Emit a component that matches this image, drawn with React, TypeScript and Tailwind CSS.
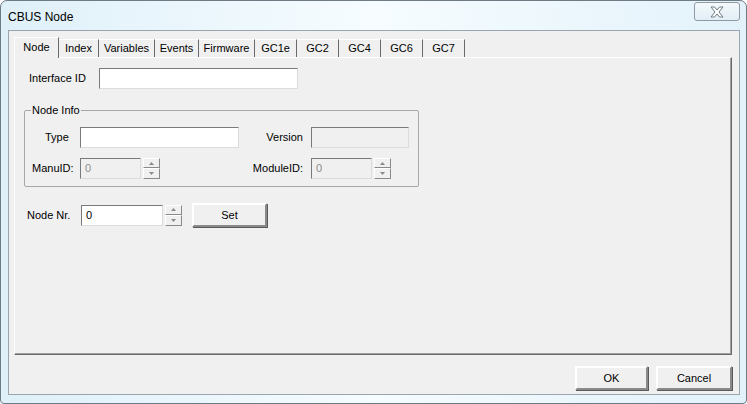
import React from "react";

const tabs = [
  { label: "Node", w: "w-[45px]" },
  { label: "Index", w: "w-[40px]" },
  { label: "Variables", w: "w-[56px]" },
  { label: "Events", w: "w-[44px]" },
  { label: "Firmware", w: "w-[56px]" },
  { label: "GC1e", w: "w-[42px]" },
  { label: "GC2", w: "w-[42px]" },
  { label: "GC4", w: "w-[42px]" },
  { label: "GC6", w: "w-[42px]" },
  { label: "GC7", w: "w-[42px]" },
];

function TextBox({ w, disabled, value }: { w: string; disabled?: boolean; value?: string }) {
  return (
    <div
      className={`${w} h-[21px] flex items-center pl-[4px] border border-t-[#7a7a7a] border-l-[#7a7a7a] border-r-[#dcdcdc] border-b-[#dcdcdc] ${
        disabled ? "bg-[#f0f0f0] text-[#8d8d8d]" : "bg-white text-black"
      }`}
    >
      {value}
    </div>
  );
}

function Arrow({ up }: { up?: boolean }) {
  return (
    <svg width="5" height="3" viewBox="0 0 5 3">
      {up ? <path d="M2.5 0 L5 3 L0 3 Z" fill="#8a8a8a" /> : <path d="M0 0 L5 0 L2.5 3 Z" fill="#8a8a8a" />}
    </svg>
  );
}

function Spinner({ className = "" }: { className?: string }) {
  return (
    <div className={`flex flex-col w-[17px] h-[21px] ${className}`}>
      <div className="h-[10px] flex items-center justify-center bg-[#f0f0f0] border border-t-white border-l-white border-r-[#8a8a8a] border-b-[#8a8a8a]">
        <Arrow up />
      </div>
      <div className="h-[11px] flex items-center justify-center bg-[#f0f0f0] border border-t-white border-l-white border-r-[#8a8a8a] border-b-[#8a8a8a]">
        <Arrow />
      </div>
    </div>
  );
}

function Button({ label, w }: { label: string; w: string }) {
  return (
    <div
      className={`${w} h-[24px] flex items-center justify-center bg-[#f0f0f0] border-2 border-t-white border-l-white border-r-[#8a8a8a] border-b-[#8a8a8a] shadow-[1px_1px_0_#5a5a5a]`}
    >
      {label}
    </div>
  );
}

export default function App() {
  return (
    <div
      className="w-[747px] h-[404px] flex flex-col rounded-t-[7px] rounded-b-[4px] border border-[#6e7a84] bg-gradient-to-r from-[#dff0f9] via-[#f6fcff] to-[#e3f2fa] text-[11px] text-black"
      style={{ fontFamily: '"Liberation Sans", Arial, sans-serif' }}
    >
      {/* title bar */}
      <div className="h-[29px] flex items-start justify-between">
        <div className="pl-[7px] pt-[7px] text-[12px]">CBUS Node</div>
        <div className="mr-[6px] mt-[1px] w-[46px] h-[19px] flex items-center justify-center rounded-[3px] border border-[#8f9aa3] bg-gradient-to-b from-[#f4f9fc] to-[#e2eef5]">
          <svg width="14" height="12" viewBox="0 0 14 12">
            <path
              d="M1 1 H4.5 L7 4 L9.5 1 H13 L9 6 L13 11 H9.5 L7 8 L4.5 11 H1 L5 6 Z"
              fill="#ffffff"
              stroke="#6f7a82"
              strokeWidth="1"
              strokeLinejoin="round"
            />
          </svg>
        </div>
      </div>

      {/* client area */}
      <div className="ml-[7px] mr-[6px] mb-[8px] flex-1 flex flex-col border border-[#9aa6af] bg-[#f0f0f0] pl-[5px] pr-[7px] pt-[6px]">
        {/* tab strip */}
        <div className="h-[20px] flex items-end">
          {tabs.map((t, i) =>
            i === 0 ? (
              <div
                key={t.label}
                className={`${t.w} h-[21px] -mb-[1px] relative z-10 flex items-center justify-center pb-[1px] bg-[#f0f0f0] border-l border-t border-r border-l-white border-t-white border-r-[#696969]`}
              >
                {t.label}
              </div>
            ) : (
              <div
                key={t.label}
                className={`${t.w} h-[18px] flex items-center justify-center bg-[#f0f0f0] border-t border-r border-t-white border-r-[#696969]`}
              >
                {t.label}
              </div>
            )
          )}
        </div>

        {/* tab panel */}
        <div className="h-[298px] flex flex-col border border-t-white border-l-white border-r-[#696969] border-b-[#696969] shadow-[inset_-1px_-1px_0_#a0a0a0] pl-[9px] pt-[10px]">
          <div className="flex items-center pl-[4px]">
            <div className="w-[71px] pl-[1px]">Interface ID</div>
            <TextBox w="w-[199px]" />
          </div>

          <fieldset className="mt-[15px] w-[395px] border border-[#a7a7a7] rounded-[2px] pb-[7px] pt-[10px]">
            <legend className="ml-[6px] px-[1px] leading-[13px]">Node Info</legend>
            <div className="flex items-center">
              <div className="w-[55px] pl-[20px]">Type</div>
              <TextBox w="w-[159px]" />
              <div className="w-[72px] text-right pr-[8px]">Version</div>
              <TextBox w="w-[98px]" disabled />
            </div>
            <div className="flex items-center mt-[10px]">
              <div className="w-[55px] pl-[7px]">ManuID:</div>
              <TextBox w="w-[61px]" disabled value="0" />
              <Spinner className="ml-[2px]" />
              <div className="w-[151px] text-right pr-[8px]">ModuleID:</div>
              <TextBox w="w-[61px]" disabled value="0" />
              <Spinner className="ml-[2px]" />
            </div>
          </fieldset>

          <div className="flex items-center mt-[16px] pl-[3px]">
            <div className="w-[54px]">Node Nr.</div>
            <TextBox w="w-[82px]" value="0" />
            <Spinner className="ml-[2px]" />
            <div className="ml-[10px]">
              <Button label="Set" w="w-[75px]" />
            </div>
          </div>
        </div>

        {/* dialog buttons */}
        <div className="mt-[11px] flex justify-end gap-[8px]">
          <Button label="OK" w="w-[73px]" />
          <Button label="Cancel" w="w-[76px]" />
        </div>
      </div>
    </div>
  );
}
